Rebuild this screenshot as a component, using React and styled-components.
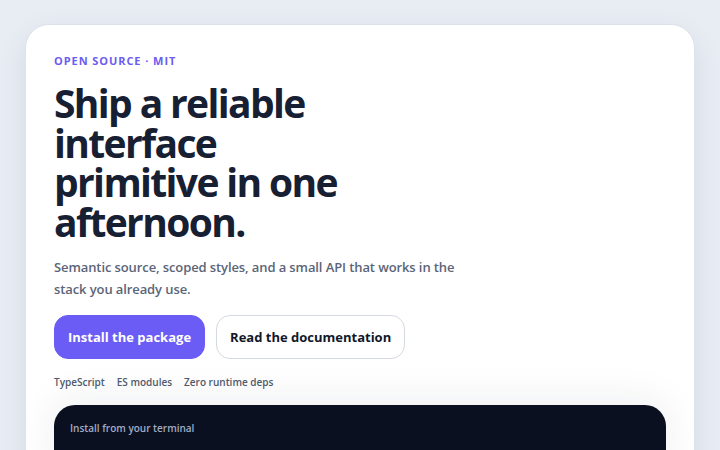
import React from "react";
import styled, { createGlobalStyle } from "styled-components";

const Global = createGlobalStyle`
  html, body { margin: 0; padding: 0; }
  body {
    background: #e8ecf3;
    font-family: "Open Sans", "Noto Sans", sans-serif;
    -webkit-font-smoothing: antialiased;
    overflow: hidden;
  }
`;

const Page = styled.div`
  padding: 24px 25px 0;
  height: 450px;
  box-sizing: border-box;
  overflow: hidden;
`;

const Card = styled.section`
  background: #ffffff;
  border: 1px solid #dde2ea;
  border-radius: 24px;
  padding: 28px 28px 0;
  box-shadow: 0 10px 30px rgba(30, 41, 70, 0.08);
  height: 460px;
  box-sizing: border-box;
  overflow: hidden;
`;

const Eyebrow = styled.div`
  color: #6c5cf0;
  font-size: 11px;
  font-weight: 700;
  letter-spacing: 0.085em;
  text-transform: uppercase;
  line-height: 16px;
`;

const Title = styled.h1`
  margin: 14px 0 0;
  color: #172033;
  font-size: 39px;
  line-height: 39.5px;
  font-weight: 700;
  letter-spacing: -0.042em;
  max-width: 300px;
`;

const Lead = styled.p`
  margin: 15px 0 0;
  color: #5b6578;
  font-size: 13px;
  font-weight: 600;
  line-height: 22px;
  letter-spacing: -0.1px;
  max-width: 420px;
`;

const Actions = styled.div`
  display: flex;
  gap: 11px;
  margin-top: 15px;
`;

const Button = styled.button`
  height: 44px;
  padding: 0 13px;
  border-radius: 14px;
  font-family: inherit;
  font-size: 13px;
  font-weight: 700;
  cursor: pointer;
  border: 1px solid ${(p) => (p.$primary ? "#6b5cf6" : "#d5d9e0")};
  background: ${(p) => (p.$primary ? "#6b5cf6" : "#ffffff")};
  color: ${(p) => (p.$primary ? "#ffffff" : "#111827")};
`;

const Tags = styled.ul`
  list-style: none;
  display: flex;
  gap: 12px;
  padding: 0;
  margin: 16px 0 0;
`;

const Tag = styled.li`
  color: #4f596b;
  font-size: 10px;
  font-weight: 600;
  line-height: 14px;
`;

const Terminal = styled.div`
  margin-top: 16px;
  background: #0b1020;
  border-radius: 21px;
  padding: 16px 16px 40px;
  box-shadow: 0 -4px 40px rgba(30, 41, 70, 0.08);
`;

const TerminalLabel = styled.div`
  color: #a1acc6;
  font-size: 10px;
  font-weight: 600;
  line-height: 14px;
`;

export default function App() {
  return (
    <>
      <Global />
      <Page>
        <Card>
          <Eyebrow>Open source · MIT</Eyebrow>
          <Title>Ship a reliable interface primitive in one afternoon.</Title>
          <Lead>
            Semantic source, scoped styles, and a small API that works in the
            stack you already use.
          </Lead>
          <Actions>
            <Button $primary>Install the package</Button>
            <Button>Read the documentation</Button>
          </Actions>
          <Tags>
            <Tag>TypeScript</Tag>
            <Tag>ES modules</Tag>
            <Tag>Zero runtime deps</Tag>
          </Tags>
          <Terminal>
            <TerminalLabel>Install from your terminal</TerminalLabel>
          </Terminal>
        </Card>
      </Page>
    </>
  );
}
